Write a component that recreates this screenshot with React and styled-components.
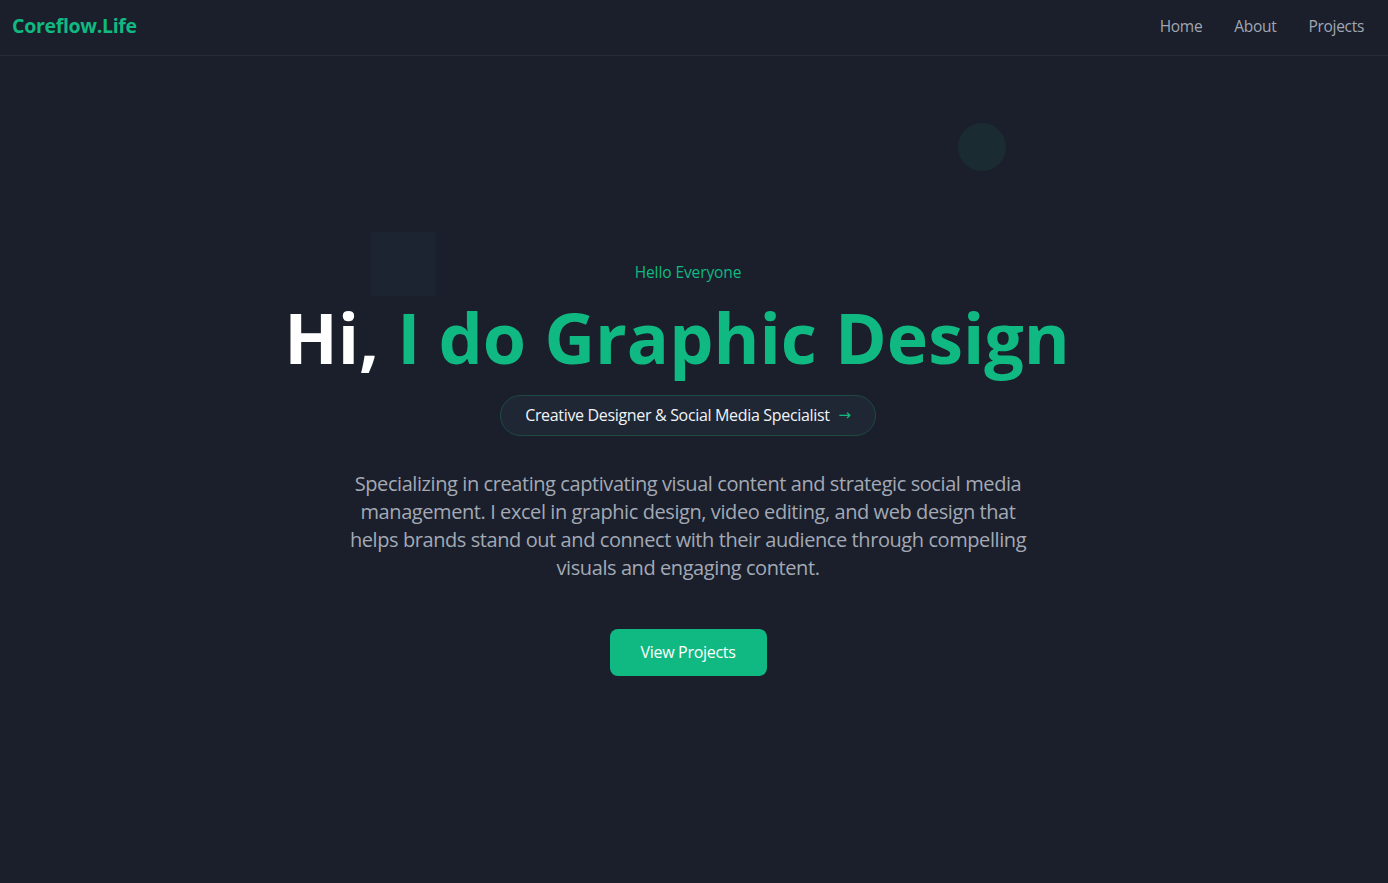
import React from 'react';
import styled, { createGlobalStyle } from 'styled-components';

const Global = createGlobalStyle`
  * { box-sizing: border-box; }
  body {
    margin: 0;
    background: #1a1f2b;
    font-family: "Open Sans", "Noto Sans", sans-serif;
    color: #fff;
  }
`;

const Header = styled.header`
  height: 56px;
  display: flex;
  align-items: center;
  justify-content: space-between;
  padding: 0 24px 4px 12px;
  border-bottom: 1px solid #252b37;
`;

const Logo = styled.div`
  color: #10b981;
  font-weight: 700;
  font-size: 19.5px;
  letter-spacing: -0.3px;
`;

const Nav = styled.nav`
  display: flex;
  gap: 32px;
`;

const NavLink = styled.a`
  color: #a0a7b4;
  font-size: 15.5px;
  letter-spacing: -0.3px;
  text-decoration: none;
`;

const Hero = styled.section`
  position: relative;
  min-height: calc(100vh - 56px);
  display: flex;
  flex-direction: column;
  align-items: center;
  justify-content: center;
  text-align: center;
  padding: 0 12px 4px 0;
`;

const Shape = styled.div`
  position: absolute;
  left: ${p => p.$left}px;
  top: ${p => p.$top}px;
  width: ${p => p.$size}px;
  height: ${p => p.$size}px;
  border-radius: ${p => (p.$round ? '50%' : '0')};
  background: ${p => p.$bg};
`;

const Hello = styled.div`
  color: #10b981;
  font-size: 15.5px;
  line-height: 24px;
  letter-spacing: -0.1px;
`;

const Title = styled.h1`
  margin: 13px 22px 0 0;
  font-size: 70px;
  line-height: 80px;
  font-weight: 700;
  letter-spacing: 0;
  color: #fff;
  span { color: #10b981; }
`;

const Pill = styled.div`
  margin-top: 18px;
  display: inline-flex;
  align-items: center;
  gap: 9px;
  height: 41px;
  padding: 0 24px;
  border-radius: 999px;
  border: 1px solid #1f4a44;
  background: #1f2735;
  color: #f1f3f5;
  font-size: 16px;
  letter-spacing: -0.33px;
`;

const Arrow = styled.span`
  color: #10b981;
  font-family: "DejaVu Sans", sans-serif;
  font-size: 15px;
`;

const Text = styled.p`
  margin: 34px 0 0;
  max-width: 690px;
  font-size: 20px;
  line-height: 28px;
  letter-spacing: -0.42px;
  color: #a3a9b5;
`;

const Button = styled.button`
  margin-top: 47px;
  width: 157px;
  height: 47px;
  border: none;
  border-radius: 8px;
  background: #10b981;
  color: #fff;
  font-family: inherit;
  font-size: 16px;
  letter-spacing: -0.3px;
  cursor: pointer;
`;

export default function App() {
  return (
    <>
      <Global />
      <Header>
        <Logo>Coreflow.Life</Logo>
        <Nav>
          <NavLink href="#">Home</NavLink>
          <NavLink href="#">About</NavLink>
          <NavLink href="#">Projects</NavLink>
        </Nav>
      </Header>
      <Hero>
        <Shape $left={371} $top={176} $size={64} $bg="#1b2430" />
        <Shape $left={958} $top={67} $size={48} $round $bg="#1a2b31" />
        <Hello>Hello Everyone</Hello>
        <Title>Hi, <span>I do Graphic Design</span></Title>
        <Pill>Creative Designer &amp; Social Media Specialist <Arrow>→</Arrow></Pill>
        <Text>
          Specializing in creating captivating visual content and strategic social media
          management. I excel in graphic design, video editing, and web design that helps
          brands stand out and connect with their audience through compelling visuals and
          engaging content.
        </Text>
        <Button>View Projects</Button>
      </Hero>
    </>
  );
}
